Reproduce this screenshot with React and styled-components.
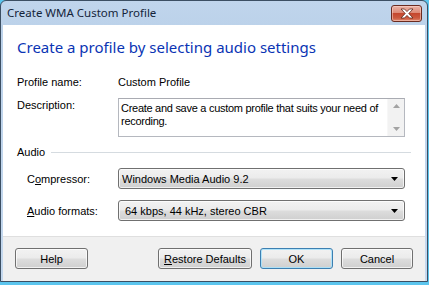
import React from "react";
import styled, { createGlobalStyle } from "styled-components";

const Global = createGlobalStyle`
  html, body { margin: 0; padding: 0; background: #5bc5ee; }
  body { font-family: "Liberation Sans", Arial, sans-serif; font-size: 11px; color: #000; }
  * { box-sizing: border-box; }
`;

const Screen = styled.div`
  width: 429px;
  height: 285px;
  padding: 0 1px 3px 0;
  background: #5bc5ee;
`;

const Frame = styled.div`
  height: 100%;
  display: flex;
  flex-direction: column;
  border: 1px solid #3c4f63;
  border-radius: 6px 6px 0 0;
  padding: 0 2px 0 2px;
  background: linear-gradient(to bottom, #c0d5ec 0px, #bcd2ea 24px, #c4d8ee 100%);
`;

const TitleBar = styled.div`
  height: 24px;
  display: flex;
  align-items: center;
  justify-content: space-between;
  padding: 0 3px 2px 4px;
`;

const Title = styled.span`
  font-family: "Noto Sans", "Open Sans", sans-serif;
  font-size: 11.5px;
  color: #14243a;
`;

const CloseBtn = styled.div`
  width: 31px;
  height: 17px;
  margin-top: 3px;
  border: 1px solid #6a2b20;
  border-radius: 3px;
  display: flex;
  align-items: center;
  justify-content: center;
  background: linear-gradient(to bottom, #eab3a7 0%, #dd8a76 45%, #c5472e 50%, #cc5a3f 80%, #e0896f 100%);
  box-shadow: inset 0 0 0 1px rgba(255, 220, 210, 0.5);
`;

const Client = styled.div`
  flex: 1;
  display: flex;
  flex-direction: column;
  background: #fff;
`;

const Main = styled.div`
  flex: 1;
  padding: 11px 20px 0 14px;
`;

const Heading = styled.h1`
  margin: 0;
  font-family: "Noto Sans", "Open Sans", sans-serif;
  font-weight: 400;
  font-size: 15px;
  line-height: 22px;
  color: #0a34b4;
`;

const Row = styled.div`
  display: grid;
  grid-template-columns: ${(p) => (p.$indent ? "91px" : "101px")} 1fr;
  padding-left: ${(p) => (p.$indent ? "10px" : "0")};
  margin-top: ${(p) => p.$mt}px;
  align-items: ${(p) => (p.$top ? "start" : "center")};
  line-height: 14px;
`;

const TextBox = styled.div`
  height: 39px;
  display: flex;
  border: 1px solid #b5b8bf;
  border-top-color: #a9abb2;
`;

const TextBody = styled.div`
  flex: 1;
  padding: 3px 1px 0 2px;
  line-height: 13px;
  letter-spacing: -0.28px;
`;

const ScrollBar = styled.div`
  width: 17px;
  display: flex;
  flex-direction: column;
  justify-content: space-between;
  align-items: center;
  padding: 5px 0 5px;
  background: #f2f2f2;
  border-left: 1px solid #f7f7f7;
`;

const GroupRow = styled.div`
  display: flex;
  align-items: center;
  margin-top: 8px;
  margin-right: -6px;
  line-height: 14px;
`;

const GroupRule = styled.div`
  flex: 1;
  height: 1px;
  margin-left: 6px;
  background: #d5dbe0;
`;

const vistaGradient = `linear-gradient(to bottom, #f2f2f2 0%, #ebebeb 48%, #dddddd 52%, #cfcfcf 100%)`;

const Combo = styled.div`
  height: 21px;
  display: flex;
  align-items: center;
  justify-content: space-between;
  padding: 0 6px 0 ${(p) => p.$pad}px;
  border: 1px solid #707070;
  border-radius: 3px;
  background: ${vistaGradient};
  box-shadow: inset 0 0 0 1px rgba(255, 255, 255, 0.7);
`;

const Footer = styled.div`
  height: 45px;
  display: flex;
  align-items: flex-start;
  gap: 8px;
  padding: 11px 12px 0 12px;
  border-top: 1px solid #dfdfdf;
  background: #f0f0f0;
`;

const Spacer = styled.div`
  flex: 1;
`;

const Button = styled.div`
  width: ${(p) => p.$w}px;
  height: 21px;
  display: flex;
  align-items: center;
  justify-content: center;
  border: 1px solid ${(p) => (p.$default ? "#3c7fb1" : "#707070")};
  border-radius: 3px;
  background: ${vistaGradient};
  box-shadow: inset 0 0 0 1px ${(p) => (p.$default ? "rgba(170, 225, 250, 0.9)" : "rgba(255, 255, 255, 0.7)")};
`;

const ArrowDown = ({ color = "#000", w = 7 }) => (
  <svg width={w} height="4" viewBox="0 0 7 4">
    <path d="M0 0 H7 L3.5 4 Z" fill={color} />
  </svg>
);

const ArrowUp = ({ color = "#a3a3a3" }) => (
  <svg width="7" height="4" viewBox="0 0 7 4">
    <path d="M0 4 H7 L3.5 0 Z" fill={color} />
  </svg>
);

export default function App() {
  return (
    <>
      <Global />
      <Screen>
        <Frame>
          <TitleBar>
            <Title>Create WMA Custom Profile</Title>
            <CloseBtn>
              <svg width="14" height="11" viewBox="0 0 14 11">
                <path
                  d="M1 1 H4.5 L7 3.6 L9.5 1 H13 L8.8 5.5 L13 10 H9.5 L7 7.4 L4.5 10 H1 L5.2 5.5 Z"
                  fill="#fff"
                  stroke="#5a2418"
                  strokeWidth="0.8"
                />
              </svg>
            </CloseBtn>
          </TitleBar>
          <Client>
            <Main>
              <Heading>Create a profile by selecting audio settings</Heading>
              <Row $mt={17}>
                <span>Profile name:</span>
                <span>Custom Profile</span>
              </Row>
              <Row $mt={9} $top>
                <span>Description:</span>
                <TextBox>
                  <TextBody>
                    Create and save a custom profile that suits your need of recording.
                  </TextBody>
                  <ScrollBar>
                    <ArrowUp />
                    <ArrowDown color="#a3a3a3" />
                  </ScrollBar>
                </TextBox>
              </Row>
              <GroupRow>
                <span>Audio</span>
                <GroupRule />
              </GroupRow>
              <Row $mt={9} $indent>
                <span>
                  C<u>o</u>mpressor:
                </span>
                <Combo $pad={3}>
                  <span>Windows Media Audio 9.2</span>
                  <ArrowDown />
                </Combo>
              </Row>
              <Row $mt={11} $indent>
                <span>
                  <u>A</u>udio formats:
                </span>
                <Combo $pad={6}>
                  <span>64 kbps, 44 kHz, stereo CBR</span>
                  <ArrowDown />
                </Combo>
              </Row>
            </Main>
            <Footer>
              <Button $w={73}>Help</Button>
              <Spacer />
              <Button $w={94}>
                <span>
                  <u>R</u>estore Defaults
                </span>
              </Button>
              <Button $w={73} $default>
                OK
              </Button>
              <Button $w={72}>Cancel</Button>
            </Footer>
          </Client>
        </Frame>
      </Screen>
    </>
  );
}
